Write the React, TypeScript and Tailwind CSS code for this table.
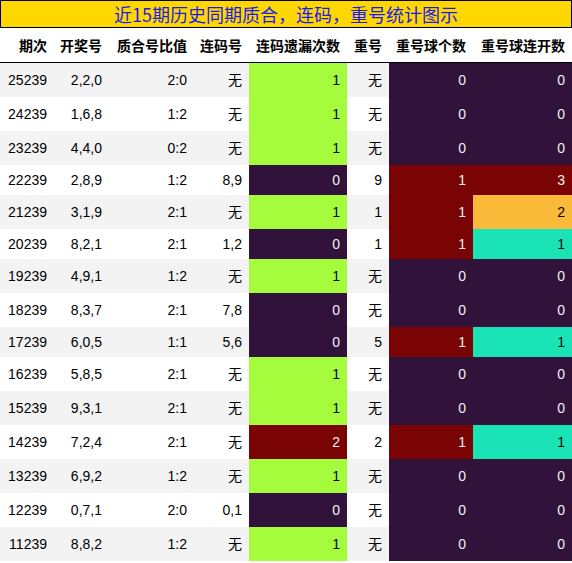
const cols = "grid grid-cols-[54px_55px_85px_55px_98px_42px_84px_99px]";

const headers = ["期次", "开奖号", "质合号比值", "连码号", "连码遗漏次数", "重号", "重号球个数", "重号球连开数"];

// [期次, 开奖号, 比值, 连码号, 遗漏, 重号, 个数, 连开数, 行高]
const rows: [string, string, string, string, number, string, number, number, number][] = [
  ["25239", "2,2,0", "2:0", "无", 1, "无", 0, 0, 34],
  ["24239", "1,6,8", "1:2", "无", 1, "无", 0, 0, 34],
  ["23239", "4,4,0", "0:2", "无", 1, "无", 0, 0, 34],
  ["22239", "2,8,9", "1:2", "8,9", 0, "9", 1, 3, 30],
  ["21239", "3,1,9", "2:1", "无", 1, "1", 1, 2, 34],
  ["20239", "8,2,1", "2:1", "1,2", 0, "1", 1, 1, 30],
  ["19239", "4,9,1", "1:2", "无", 1, "无", 0, 0, 34],
  ["18239", "8,3,7", "2:1", "7,8", 0, "无", 0, 0, 34],
  ["17239", "6,0,5", "1:1", "5,6", 0, "5", 1, 1, 30],
  ["16239", "5,8,5", "2:1", "无", 1, "无", 0, 0, 34],
  ["15239", "9,3,1", "2:1", "无", 1, "无", 0, 0, 34],
  ["14239", "7,2,4", "2:1", "无", 2, "2", 1, 1, 34],
  ["13239", "6,9,2", "1:2", "无", 1, "无", 0, 0, 34],
  ["12239", "0,7,1", "2:0", "0,1", 0, "无", 0, 0, 34],
  ["11239", "8,8,2", "1:2", "无", 1, "无", 0, 0, 34],
];

// turbo colour map steps
const miss = ["bg-[#30123b] text-[#f1f1f1]", "bg-[#a4fc3c] text-black", "bg-[#7a0403] text-[#f1f1f1]"];
const cnt = ["bg-[#30123b] text-[#f1f1f1]", "bg-[#7a0403] text-[#f1f1f1]"];
const run = [
  "bg-[#30123b] text-[#f1f1f1]",
  "bg-[#1ae4b6] text-black",
  "bg-[#faba39] text-black",
  "bg-[#7a0403] text-[#f1f1f1]",
];

const cell = "flex items-center justify-end pr-[7px]";

export default function App() {
  return (
    <div className="w-[572px] h-[563px] bg-white font-['Liberation_Sans','Noto_Sans_CJK_SC',sans-serif] text-[14px] text-black">
      <div className="h-[28px] border border-black bg-[#ffd700] flex items-center justify-center text-[18px] text-[#1c1ce8] font-['Noto_Sans_CJK_SC',sans-serif] leading-none">
        近15期历史同期质合，连码，重号统计图示
      </div>
      <div className={`${cols} h-[35px] border-b border-black font-['Noto_Sans_CJK_SC',sans-serif] font-bold`}>
        {headers.map((h) => (
          <div key={h} className={cell}>
            {h}
          </div>
        ))}
      </div>
      <div>
        {rows.map((r, i) => (
          <div
            key={r[0]}
            className={`${cols} ${r[8] === 34 ? "h-[34px]" : "h-[30px]"} ${i % 2 === 0 ? "bg-[#f3f3f3]" : "bg-white"}`}
          >
            <div className={cell}>{r[0]}</div>
            <div className={cell}>{r[1]}</div>
            <div className={cell}>{r[2]}</div>
            <div className={`${cell} pr-[6px]`}>{r[3]}</div>
            <div className={`${cell} ${miss[r[4]]}`}>{r[4]}</div>
            <div className={cell}>{r[5]}</div>
            <div className={`${cell} ${cnt[r[6]]}`}>{r[6]}</div>
            <div className={`${cell} ${run[r[7]]}`}>{r[7]}</div>
          </div>
        ))}
      </div>
    </div>
  );
}
